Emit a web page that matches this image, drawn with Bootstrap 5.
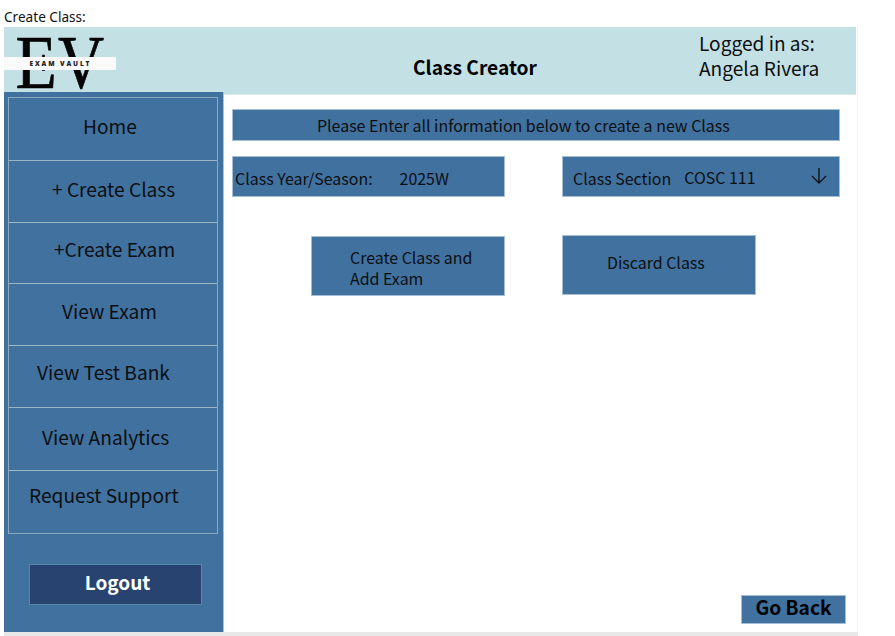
<!DOCTYPE html>
<html lang="en">
<head>
<meta charset="utf-8">
<meta name="viewport" content="width=device-width, initial-scale=1">
<title>Create Class</title>
<link href="https://cdn.jsdelivr.net/npm/bootstrap@5.3.0/dist/css/bootstrap.min.css" rel="stylesheet">
<style>
body{width:895px;height:636px;overflow:hidden;background:#fff;color:#0c0f12;font-family:"Noto Sans CJK SC",sans-serif;font-size:15.95px;line-height:21px}
.page-label{height:27px;padding:7px 0 0 4px;font:400 13.6px/20px "Noto Sans",sans-serif;color:#111}
.frame{width:854px;height:605px;margin-left:4px;border-right:1px solid #f3f3f5}
.topbar{width:852px;height:68px;background:#c3e0e4;border-bottom:1px solid #d9ebee}
.logo{width:112px;height:65px}
.title{margin-left:297px;width:286px;padding-top:29px;font-size:19.2px;line-height:22px;font-weight:700;color:#000}
.user{padding-top:4px;font-size:19.1px;line-height:25px;white-space:nowrap}
.side{width:220px;height:540px;margin-top:-3px;background:#41719f;border-right:1px solid #a9c2d6;padding:5px 5px 0 4px;position:relative}
.menu{border:1px solid #8ba9bd}
.menu a{display:block;color:#0c0f12;text-decoration:none;font-size:19.15px;line-height:26px;white-space:nowrap;border-bottom:1px solid #9bb5c5}
.menu a:last-child{border-bottom:0}
.n1{height:63px;padding:15px 0 0 74px}
.n2{height:62px;padding:15px 0 0 43px}
.n3{height:61px;padding:13px 0 0 45px}
.n4{height:62px;padding:14px 0 0 53px}
.n5{height:62px;padding:13px 0 0 28px}
.n6{height:63px;padding:16px 0 0 33px}
.n7{height:62px;padding:11px 0 0 20px}
.logout{width:173px;height:41px;margin:30px 0 0 21px;background:#28436f;border:1px solid #5589a6;border-radius:0;color:#fff;font-size:19px;font-weight:700;line-height:24px;padding:5px 0 0 4px;display:block}
.blue{background:#41719f;border:1px solid #a5bfd5;border-radius:0;color:#0c0f12;white-space:nowrap}
.content{padding:14px 17px 0 8px;width:633px;height:537px}
.notice{height:32px;padding:5px 0 0 84px}
.fields{margin-top:15px}
.season{width:273px;height:41px;padding:11px 0 0 2px}
.section{width:278px;height:41px;padding:11px 12px 0 10px}
.season-value{margin-left:27px}
.section-value{margin:-1px 0 0 13px}
.arrow{width:16px;height:18px;margin-top:-1px}
.actions{margin:38px 0 0 79px;gap:57px}
.create{width:194px;height:60px;margin-top:1px;padding:3px 0 0 38px;text-align:left}
.discard{width:194px;height:60px;padding:0 0 5px 44px;text-align:left}
.create,.discard{font-size:15.95px;line-height:21px;display:flex;align-items:center}
.back{width:105px;height:29px;margin:0 -6px 8px 0;font-size:19.2px;line-height:22px;font-weight:700;color:#000;padding:0 0 5px}
.footer-strip{height:4px;width:854px;margin-left:4px;background:#e8e8e8}
</style>
</head>
<body>
<div class="page-label">Create Class:</div>
<main class="frame">
  <header class="topbar d-flex">
    <svg class="logo" viewBox="0 0 112 65" role="img" aria-label="Exam Vault">
      <g font-family="Liberation Serif,serif" font-size="76" fill="#050505" stroke="#050505" stroke-width=".7">
        <text transform="translate(11.5 61.3) scale(.89 1)">E</text>
        <text transform="translate(54 61.3) scale(.84 1)">V</text>
      </g>
      <rect y="30" width="112" height="13" fill="#fafafa"/>
      <text x="25.5" y="38.8" textLength="60" font-family="Open Sans,sans-serif" font-size="6.6" font-weight="800" fill="#222">EXAM VAULT</text>
    </svg>
    <div class="title">Class Creator</div>
    <div class="user">Logged in as:<br>Angela Rivera</div>
  </header>
  <div class="d-flex">
    <aside class="side flex-shrink-0">
      <nav class="menu">
        <a class="n1" href="#">Home</a>
        <a class="n2" href="#">+ Create Class</a>
        <a class="n3" href="#">+Create Exam</a>
        <a class="n4" href="#">View Exam</a>
        <a class="n5" href="#">View Test Bank</a>
        <a class="n6" href="#">View Analytics</a>
        <a class="n7" href="#">Request Support</a>
      </nav>
      <a class="btn logout" href="#">Logout</a>
    </aside>
    <section class="content d-flex flex-column">
      <div class="blue notice">Please Enter all information below to create a new Class</div>
      <div class="fields d-flex justify-content-between">
        <div class="blue season d-flex"><span>Class Year/Season:</span><span class="season-value">2025W</span></div>
        <div class="blue section d-flex"><span>Class Section</span><span class="section-value">COSC 111</span>
          <svg class="arrow ms-auto" viewBox="0 0 16 18" fill="none" stroke="#0c0f12" stroke-width="1.3"><path d="M8 1v15M1 9l7 7 7-7"/></svg>
        </div>
      </div>
      <div class="actions d-flex">
        <button class="btn blue create">Create Class and<br>Add Exam</button>
        <button class="btn blue discard">Discard Class</button>
      </div>
      <button class="btn blue back mt-auto align-self-end">Go Back</button>
    </section>
  </div>
</main>
<div class="footer-strip"></div>
<script src="https://cdn.jsdelivr.net/npm/bootstrap@5.3.0/dist/js/bootstrap.bundle.min.js"></script>
</body>
</html>
